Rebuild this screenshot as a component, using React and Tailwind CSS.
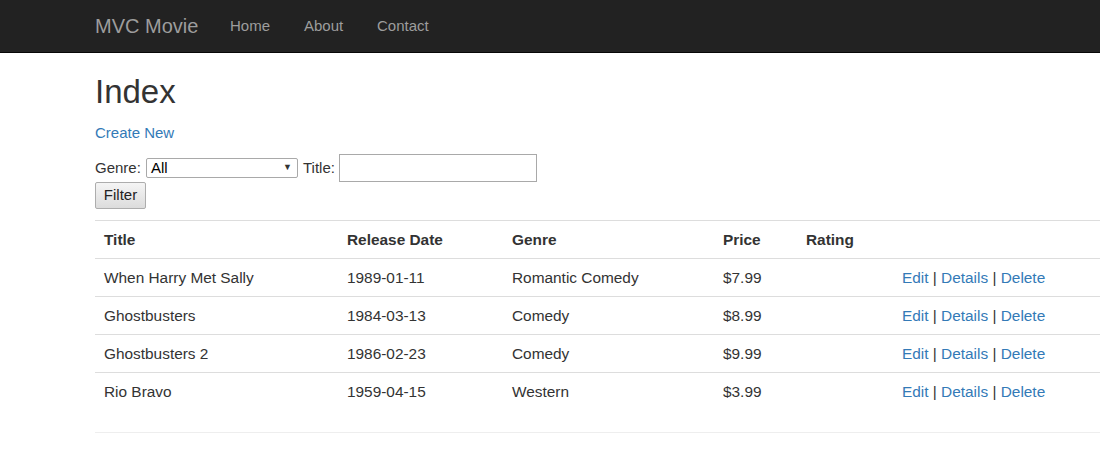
const movies = [
  { title: "When Harry Met Sally", date: "1989-01-11", genre: "Romantic Comedy", price: "$7.99" },
  { title: "Ghostbusters", date: "1984-03-13", genre: "Comedy", price: "$8.99" },
  { title: "Ghostbusters 2", date: "1986-02-23", genre: "Comedy", price: "$9.99" },
  { title: "Rio Bravo", date: "1959-04-15", genre: "Western", price: "$3.99" },
];

const font = { fontFamily: '"Liberation Sans", Arial, sans-serif' };

export default function App() {
  return (
    <div className="w-full min-h-[450px] bg-white overflow-hidden text-[15px] text-[#333]" style={font}>
      {/* Navbar */}
      <nav className="h-[53px] bg-[#222] border-b border-[#080808]">
        <div className="flex items-center h-[52px] pl-[95px]">
          <span className="text-[20px] text-[#9d9d9d] w-[135px]">MVC Movie</span>
          <span className="text-[#9d9d9d] w-[74px]">Home</span>
          <span className="text-[#9d9d9d] w-[73px]">About</span>
          <span className="text-[#9d9d9d]">Contact</span>
        </div>
      </nav>

      <div className="pl-[95px] w-[1120px]">
        <h1 className="text-[33px] leading-[40px] mt-[19px] mb-[11px] text-[#333]">Index</h1>
        <p className="leading-[20px] mb-[11px] mt-[2px]">
          <a className="text-[#337ab7]">Create New</a>
        </p>

        {/* Filter form */}
        <div className="flex items-center h-[28px]">
          <span className="w-[51px]">Genre:</span>
          <div className="relative w-[152px] h-[20px] border border-[#a9a9a9] rounded-[2px] flex items-center px-[4px] text-[15px] text-black">
            All
            <span className="absolute right-[5px] top-[2px] text-[9px] text-[#333]">▼</span>
          </div>
          <span className="ml-[5px] w-[36px]">Title:</span>
          <div className="w-[198px] h-[28px] border border-[#a9a9a9]"></div>
        </div>
        <button className="h-[27px] w-[51px] border border-[#adadad] rounded-[2px] bg-gradient-to-b from-[#f5f5f5] to-[#dcdcdc] text-[15px] text-[#222]">
          Filter
        </button>

        {/* Table */}
        <table className="mt-[11px] w-[1025px] border-collapse border-t border-[#ddd] text-[15.4px]">
          <thead>
            <tr className="h-[38px] border-b border-[#ddd]">
              <th className="w-[244px] text-left font-bold px-[9px] pt-[1px]">Title</th>
              <th className="w-[165px] text-left font-bold px-[8px] pt-[1px]">Release Date</th>
              <th className="w-[211px] text-left font-bold px-[8px] pt-[1px]">Genre</th>
              <th className="w-[83px] text-left font-bold px-[8px] pt-[1px]">Price</th>
              <th className="w-[96px] text-left font-bold px-[8px] pt-[1px]">Rating</th>
              <th></th>
            </tr>
          </thead>
          <tbody>
            {movies.map((m, i) => (
              <tr key={m.title} className={"h-[38px] " + (i < movies.length - 1 ? "border-b border-[#ddd]" : "")}>
                <td className="px-[9px]">{m.title}</td>
                <td className="px-[8px]">{m.date}</td>
                <td className="px-[8px]">{m.genre}</td>
                <td className="px-[8px]">{m.price}</td>
                <td className="px-[8px]"></td>
                <td className="px-[8px]">
                  <a className="text-[#337ab7]">Edit</a> | <a className="text-[#337ab7]">Details</a> |{" "}
                  <a className="text-[#337ab7]">Delete</a>
                </td>
              </tr>
            ))}
          </tbody>
        </table>
        <hr className="mt-[21px] border-t border-[#eee]" />
      </div>
    </div>
  );
}
